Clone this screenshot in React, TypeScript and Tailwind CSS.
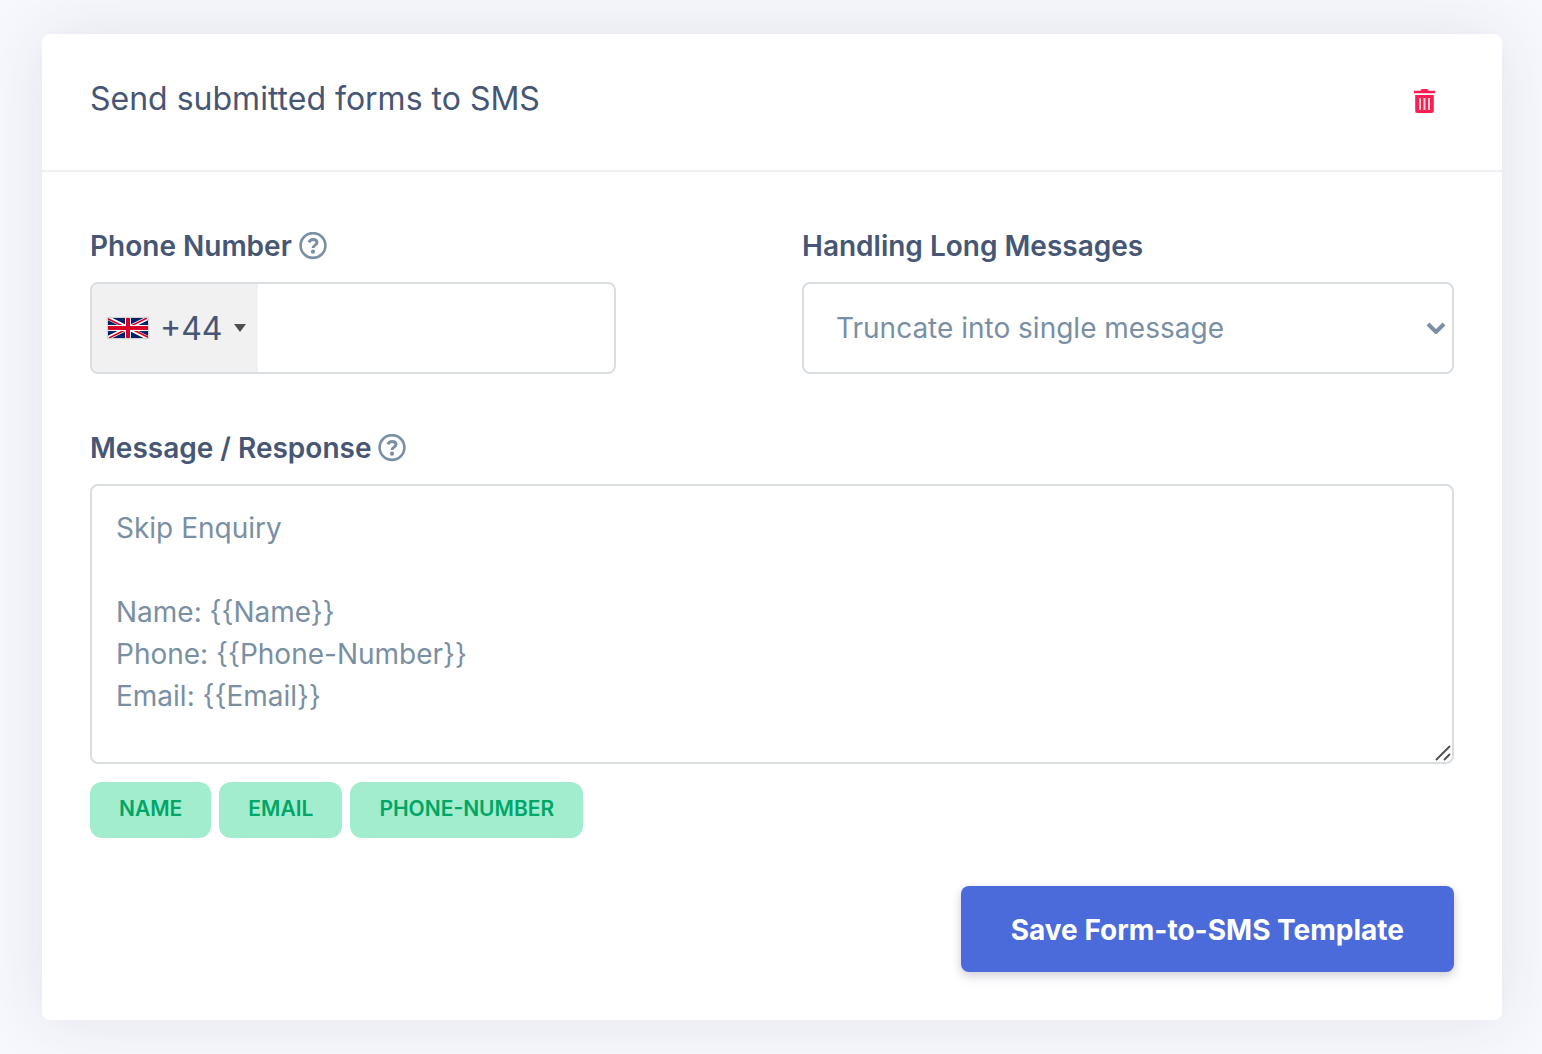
import { useState } from "react";

const DEFAULT_MESSAGE = `Skip Enquiry

Name: {{Name}}
Phone: {{Phone-Number}}
Email: {{Email}}
`;

const FIELDS = ["Name", "Email", "Phone-Number"];

function TrashIcon() {
  return (
    <svg className="h-6 w-[22px]" viewBox="0 0 22 24" fill="currentColor" aria-hidden="true">
      <path d="M0 1.700h6.500L7.500 0h6l1 1.700H21v2.600H0z" />
      <path
        fillRule="evenodd"
        d="M1.200 6h18.600v16a2 2 0 0 1-2 2H3.200a2 2 0 0 1-2-2zM5 9v12h2V9zM9.500 9v12h2V9zM14 9v12h2V9z"
      />
      <path opacity="0.2" d="M5 9h11v12H5z" />
    </svg>
  );
}

function HelpIcon() {
  return (
    <svg className="size-7 text-[#7a8fa3]" viewBox="0 0 28 28" fill="none" aria-hidden="true">
      <circle cx="14" cy="13.500" r="12.400" stroke="currentColor" strokeWidth="2.600" />
      <path
        d="M9.900 10.400c.8-2 2.200-3 4.200-3 2.300 0 3.900 1.300 3.900 3.100 0 2.600-3.900 2.700-3.900 5.400"
        stroke="currentColor"
        strokeWidth="3"
      />
      <circle cx="14" cy="19.700" r="2.100" fill="currentColor" />
    </svg>
  );
}

function UkFlag() {
  return (
    <svg className="h-5 w-10 shadow-[0_0_1px_1px_#d4d4d4]" viewBox="0 0 40 20" aria-hidden="true">
      <path fill="#012169" d="M0 0h40v20H0z" />
      <path stroke="#fff" strokeWidth="4" d="M0 0l40 20M40 0L0 20" />
      <path stroke="#d80027" strokeWidth="1.600" d="M0 .8l18 9M40 19.200l-18-9M39 0L22 8.500M1 20l17-8.500" />
      <path stroke="#fff" strokeWidth="6" d="M20 0v20M0 10h40" />
      <path stroke="#d80027" strokeWidth="4" d="M20 0v20M0 10h40" />
    </svg>
  );
}

export default function App() {
  const [message, setMessage] = useState(DEFAULT_MESSAGE);

  return (
    <main className="min-h-screen bg-[#f7f8fe] py-[34px] pr-10 pl-[42px] font-[Inter,sans-serif] text-[#465674]">
      <section className="rounded-lg bg-white shadow-[0_0_64px_rgba(31,45,61,0.1)]">
        <header className="flex items-center justify-between border-b-2 border-[#eff0f2] px-12 pt-[37px] pb-[39px]">
          <h1 className="pb-1 text-[32px] leading-14">Send submitted forms to SMS</h1>
          <button type="button" aria-label="Delete" className="p-[18px] text-[#ff1f52]">
            <TrashIcon />
          </button>
        </header>

        <form className="px-12 pt-[54px] pb-12" onSubmit={(e) => e.preventDefault()}>
          <div className="grid grid-cols-2 gap-[60px]">
            <div>
              <div className="mb-4 flex items-center gap-[7px]">
                <label htmlFor="phone" className="text-[28px] leading-10 font-semibold">
                  Phone Number
                </label>
                <HelpIcon />
              </div>
              <div className="flex h-[92px] max-w-[526px] overflow-hidden rounded-lg border-2 border-[#d9dee2]">
                <button
                  type="button"
                  aria-label="Country code"
                  className="flex shrink-0 items-center bg-[#f1f1f1] pr-3 pl-4 text-[32px]"
                >
                  <UkFlag />
                  <span className="ml-3 pt-0.5">+44</span>
                  <svg className="ml-[11px] h-2 w-3" viewBox="0 0 12 8" fill="#4d4d4d" aria-hidden="true">
                    <path d="M0 0h12L6 8z" />
                  </svg>
                </button>
                <input id="phone" type="tel" className="min-w-0 flex-1 px-4 text-[28px] outline-none" />
              </div>
            </div>

            <div>
              <label htmlFor="handling" className="mb-4 block text-[28px] leading-10 font-semibold">
                Handling Long Messages
              </label>
              <div className="relative">
                <select
                  id="handling"
                  className="h-[92px] w-full appearance-none rounded-lg border-2 border-[#d9dee2] bg-white px-8 text-[28px] text-[#7a8fa3]"
                >
                  <option>Truncate into single message</option>
                  <option>Split into multiple messages</option>
                </select>
                <svg
                  className="pointer-events-none absolute top-10 right-2 h-3 w-5 text-[#7a8fa3]"
                  viewBox="0 0 20 12"
                  fill="none"
                  aria-hidden="true"
                >
                  <path d="M2 2l8 8 8-8" stroke="currentColor" strokeWidth="4" />
                </svg>
              </div>
            </div>
          </div>

          <div className="mt-[54px] mb-4 flex items-center gap-[7px]">
            <label htmlFor="message" className="text-[28px] leading-10 font-semibold">
              Message / Response
            </label>
            <HelpIcon />
          </div>
          <div className="relative">
            <textarea
              id="message"
              value={message}
              onChange={(e) => setMessage(e.target.value)}
              className="block h-[280px] w-full resize-none overflow-hidden rounded-lg border-2 border-[#d9dee2] px-6 pt-[21px] pb-5 text-[28px] leading-[42px] text-[#7a8fa3]"
            />
            <svg
              className="pointer-events-none absolute right-[3px] bottom-[3px] size-4"
              viewBox="0 0 16 16"
              stroke="#4d4d4d"
              strokeWidth="1.800"
              aria-hidden="true"
            >
              <path d="M1 15L15 1M9 15l6-6" />
            </svg>
          </div>

          <div className="mt-[18px] flex flex-wrap gap-2">
            {FIELDS.map((field) => (
              <button
                key={field}
                type="button"
                onClick={() => setMessage(message + `{{${field}}}`)}
                className="h-14 rounded-xl bg-[#a3edcf] px-[29px] pb-0.5 text-[21px] font-semibold text-[#00a667] uppercase"
              >
                {field}
              </button>
            ))}
          </div>

          <div className="mt-12 flex justify-end">
            <button
              type="submit"
              className="h-[86px] rounded-lg bg-[#4b6bda] px-[50px] pt-0.5 text-[28px] font-bold text-white shadow-[0_6px_12px_rgba(50,50,93,0.11),0_2px_8px_rgba(0,0,0,0.12)]"
            >
              Save Form-to-SMS Template
            </button>
          </div>
        </form>
      </section>
    </main>
  );
}
